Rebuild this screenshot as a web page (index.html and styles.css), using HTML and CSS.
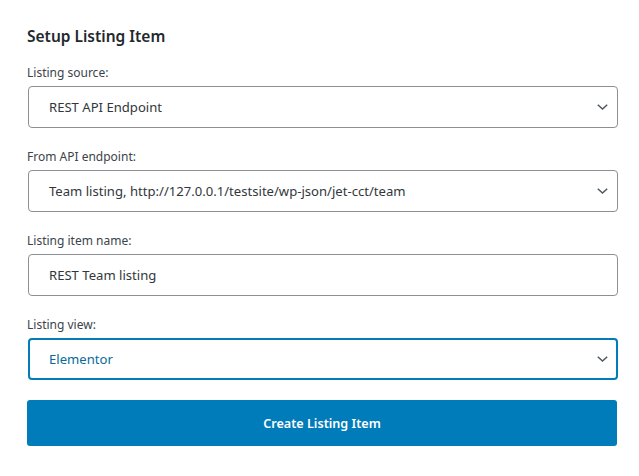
FILE: index.html
```html
<!DOCTYPE html>
<html>
<head>
<meta charset="utf-8">
<link rel="stylesheet" href="styles.css">
</head>
<body>
<div class="panel">
  <h2 class="title">Setup Listing Item</h2>
  <div class="field">
    <label class="label">Listing source:</label>
    <div class="select"><span class="value">REST API Endpoint</span><svg class="chev" width="11" height="6" viewBox="0 0 11 6"><path d="M0.8 0.8l4.7 4.2 4.7-4.2" fill="none" stroke="#50575e" stroke-width="1.5"/></svg></div>
  </div>
  <div class="field">
    <label class="label">From API endpoint:</label>
    <div class="select"><span class="value">Team listing, http://127.0.0.1/testsite/wp-json/jet-cct/team</span><svg class="chev" width="11" height="6" viewBox="0 0 11 6"><path d="M0.8 0.8l4.7 4.2 4.7-4.2" fill="none" stroke="#50575e" stroke-width="1.5"/></svg></div>
  </div>
  <div class="field">
    <label class="label">Listing item name:</label>
    <div class="select"><span class="value">REST Team listing</span></div>
  </div>
  <div class="field">
    <label class="label">Listing view:</label>
    <div class="select focus"><span class="value">Elementor</span><svg class="chev" width="11" height="6" viewBox="0 0 11 6"><path d="M0.8 0.8l4.7 4.2 4.7-4.2" fill="none" stroke="#50575e" stroke-width="1.5"/></svg></div>
  </div>
  <button class="btn">Create Listing Item</button>
</div>
</body>
</html>
```
FILE: styles.css
```css
html, body {
  margin: 0;
  padding: 0;
  background: #fff;
}
body {
  font-family: "Noto Sans", "Open Sans", sans-serif;
}
.panel {
  width: 591px;
  padding: 26px 0 0 27px;
  display: flex;
  flex-direction: column;
}
.title {
  margin: 0 0 18px 0;
  font-size: 15.5px;
  line-height: 20px;
  font-weight: 600;
  color: #23282d;
}
.field {
  display: flex;
  flex-direction: column;
  gap: 4px;
  margin-bottom: 20px;
}
.label {
  font-size: 12px;
  line-height: 18px;
  color: #3c434a;
}
.select {
  box-sizing: border-box;
  height: 42px;
  margin-left: 1px;
  border: 1px solid #8c8f94;
  border-radius: 4px;
  display: flex;
  align-items: center;
  justify-content: space-between;
  padding: 0 9px 0 20px;
  font-size: 13.1px;
  color: #32373c;
}
.select.focus {
  border: 2px solid #007cba;
  padding-left: 19px;
  padding-right: 8px;
  color: #0a6a9a;
}
.chev {
  flex: none;
}
.btn {
  box-sizing: border-box;
  height: 46px;
  width: 590px;
  border: none;
  border-radius: 3px;
  background: #007cba;
  color: #fff;
  font-family: "Noto Sans", "Open Sans", sans-serif;
  font-size: 12.6px;
  font-weight: 600;
  cursor: pointer;
}
```
